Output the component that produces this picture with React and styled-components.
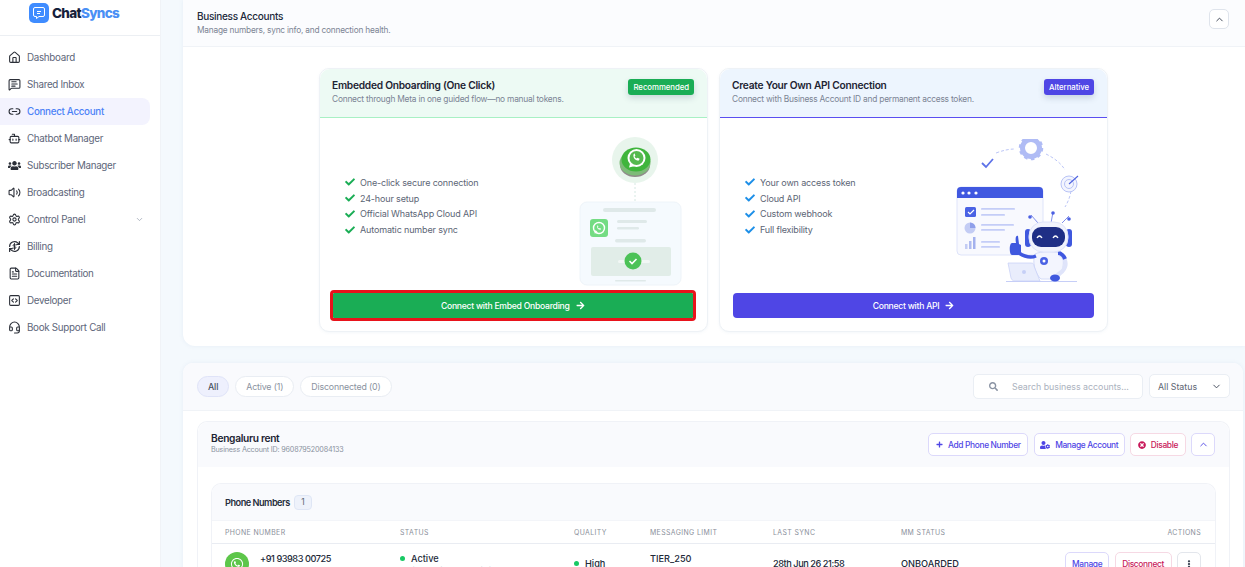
import React from "react";
import styled, { createGlobalStyle } from "styled-components";
import {
  House,
  MessageSquareText,
  Link2,
  Bot,
  Volume2,
  Settings,
  FileText,
  SquareCode,
  Headset,
  ChevronDown,
  ChevronUp,
} from "lucide-react";
import {
  FaUsers,
  FaCheck,
  FaPlus,
  FaUserCog,
  FaTimesCircle,
  FaSearch,
  FaEllipsisV,
  FaArrowRight,
  FaWhatsapp,
} from "react-icons/fa";

const GlobalStyle = createGlobalStyle`
  html, body {
    margin: 0;
    height: 567px;
    overflow: hidden;
    background: #f4f9fd;
    font-family: "Inter", "Noto Sans", sans-serif;
    color: #1f2937;
  }
  * { box-sizing: border-box; }
`;

const Page = styled.div`
  display: flex;
  width: 1245px;
  height: 567px;
  overflow: hidden;
`;

const Sidebar = styled.aside`
  width: 161px;
  flex-shrink: 0;
  background: #fff;
  border-right: 1px solid #f0f3f7;
`;
const LogoBar = styled.div`
  height: 36px;
  display: flex;
  align-items: flex-start;
  gap: 3px;
  padding: 3px 0 0 29px;
  border-bottom: 1px solid #eceff3;
`;
const LogoMark = styled.div`
  width: 20px;
  height: 20px;
  border-radius: 5px;
  background: #3f8cff;
  display: flex;
  align-items: center;
  justify-content: center;
`;
const LogoText = styled.div`
  font-size: 13.5px;
  line-height: 20px;
  font-weight: 800;
  letter-spacing: -0.7px;
  color: #15203a;
  span {
    color: #4a90f5;
  }
`;
const Nav = styled.nav`
  display: flex;
  flex-direction: column;
  padding: 8px 10px 0 0;
`;
const NavItem = styled.div`
  height: 27px;
  display: flex;
  align-items: center;
  gap: 6px;
  padding: 0 6px 0 8px;
  font-size: 9.8px;
  letter-spacing: -0.3px;
  border-radius: 0 8px 8px 0;
  color: ${(p) => (p.$active ? "#4c82f7" : "#5d6679")};
  font-weight: ${(p) => (p.$active ? 500 : 400)};
  background: ${(p) => (p.$active ? "#f3f3fe" : "transparent")};
  svg {
    flex-shrink: 0;
    color: #2b2f38;
  }
`;
const NavCaret = styled.span`
  margin-left: auto;
  display: flex;
  svg {
    color: #9aa3b2;
  }
`;

const Main = styled.main`
  flex: 1;
  min-width: 0;
  padding-left: 22px;
  display: flex;
  flex-direction: column;
  gap: 17px;
`;
const TopPanel = styled.section`
  background: #fff;
  border-radius: 0 0 0 12px;
  box-shadow: 0 0 4px rgba(120, 150, 190, 0.12);
`;
const TopHead = styled.header`
  height: 47px;
  padding: 9px 14px 0;
  display: flex;
  justify-content: space-between;
  background: #fbfcfe;
  border-bottom: 1px solid #f0f3f7;
`;
const TopTitle = styled.div`
  font-size: 10px;
  font-weight: 500;
  letter-spacing: -0.3px;
  line-height: 14px;
  color: #20283a;
`;
const TopSub = styled.div`
  font-size: 8.3px;
  letter-spacing: -0.2px;
  line-height: 11px;
  margin-top: 2px;
  color: #7b8494;
`;
const CollapseBtn = styled.button`
  width: 20px;
  height: 20px;
  padding: 0;
  margin-right: 2px;
  display: flex;
  align-items: center;
  justify-content: center;
  background: #fff;
  border: 1px solid #dfe4ec;
  border-radius: 5px;
  color: #333c4d;
`;
const CardRow = styled.div`
  display: flex;
  justify-content: center;
  gap: 11px;
  padding: 21px 1px 14px 0;
`;
const Card = styled.article`
  width: 389px;
  height: 264px;
  display: flex;
  flex-direction: column;
  background: #fff;
  border: 1px solid #eef2f6;
  border-radius: 10px;
  box-shadow: 0 1px 3px rgba(120, 150, 190, 0.08);
`;
const CardHead = styled.header`
  height: 49px;
  flex-shrink: 0;
  padding: 9px 13px 0 12px;
  display: flex;
  justify-content: space-between;
  align-items: flex-start;
  border-radius: 10px 10px 0 0;
  background: ${(p) => p.$bg};
  border-bottom: 1px solid ${(p) => p.$line};
`;
const CardTitle = styled.div`
  font-size: 10.2px;
  font-weight: 600;
  letter-spacing: -0.25px;
  line-height: 14px;
  color: #1d2433;
`;
const CardSub = styled.div`
  font-size: 8.4px;
  letter-spacing: -0.23px;
  line-height: 11px;
  margin-top: 2px;
  color: #7b8494;
`;
const Badge = styled.span`
  height: 16px;
  margin-top: 1px;
  padding: 0 5px;
  display: flex;
  align-items: center;
  font-size: 7.8px;
  font-weight: 500;
  letter-spacing: -0.05px;
  color: #fff;
  border-radius: 3px;
  background: ${(p) => p.$bg};
  box-shadow: 0 3px 6px rgba(60, 80, 110, 0.2);
`;
const CardBody = styled.div`
  flex: 1;
  min-height: 0;
  display: flex;
  flex-direction: column;
  padding: 0 13px 13px;
`;
const Feature = styled.div`
  flex: 1;
  display: flex;
  align-items: center;
  justify-content: space-between;
  padding-left: 12px;
`;
const CheckList = styled.ul`
  list-style: none;
  margin: 1px 0 0;
  padding: 0;
`;
const CheckItem = styled.li`
  height: 15.8px;
  display: flex;
  align-items: center;
  gap: 5px;
  font-size: 9px;
  letter-spacing: -0.15px;
  color: #5c6575;
  svg {
    color: ${(p) => p.$tick};
  }
`;
const Art = styled.div`
  margin: 11px ${(p) => p.$right}px 0 0;
  display: flex;
`;
const WideButton = styled.button`
  height: 25px;
  flex-shrink: 0;
  margin-right: ${(p) => (p.$flagged ? 1.5 : 0)}px;
  display: flex;
  align-items: center;
  justify-content: center;
  gap: 6px;
  border: 0;
  border-radius: ${(p) => (p.$flagged ? 1 : 4)}px;
  font-family: inherit;
  font-size: 8.6px;
  font-weight: 500;
  letter-spacing: -0.25px;
  color: #fff;
  background: ${(p) => p.$bg};
  outline: ${(p) => (p.$flagged ? "3.5px solid #e8131b" : "none")};
`;

const BottomPanel = styled.section`
  flex: 1;
  margin-right: 2px;
  background: #fff;
  border-radius: 10px 10px 0 0;
  box-shadow: 0 0 4px rgba(120, 150, 190, 0.12);
`;
const Toolbar = styled.div`
  height: 48px;
  display: flex;
  align-items: flex-start;
  padding: 11px 13px 0 14px;
  background: #f9fafd;
  border-bottom: 1px solid #f0f3f7;
  border-radius: 10px 10px 0 0;
`;
const Pills = styled.div`
  display: flex;
  gap: 6px;
  padding-top: 2px;
`;
const Pill = styled.span`
  height: 21px;
  padding: 0 10px;
  display: flex;
  align-items: center;
  font-size: 8.8px;
  letter-spacing: -0.15px;
  font-weight: ${(p) => (p.$on ? 500 : 400)};
  color: ${(p) => (p.$on ? "#48505f" : "#8a92a0")};
  background: ${(p) => (p.$on ? "#eef0fd" : "#fff")};
  border: 1px solid ${(p) => (p.$on ? "#dfe3f8" : "#e9edf3")};
  border-radius: 11px;
`;
const Search = styled.div`
  margin-left: auto;
  width: 170px;
  height: 25px;
  display: flex;
  align-items: center;
  gap: 14px;
  padding-left: 15px;
  font-size: 8.8px;
  color: #abb2be;
  background: #fff;
  border: 1px solid #eaeef4;
  border-radius: 5px;
  svg {
    color: #8a93a3;
  }
`;
const StatusSelect = styled.div`
  margin-left: 6px;
  width: 81px;
  height: 24px;
  display: flex;
  align-items: center;
  justify-content: space-between;
  padding: 0 7px 0 8px;
  font-size: 8.8px;
  color: #5d6573;
  background: #fff;
  border: 1px solid #eaeef4;
  border-radius: 5px;
`;

const AccountWrap = styled.div`
  padding: 10px 13px 0 14px;
`;
const Account = styled.div`
  border: 1px solid #f0f2f7;
  border-bottom: 0;
  border-radius: 10px 10px 0 0;
`;
const AccountHead = styled.div`
  height: 45px;
  display: flex;
  justify-content: space-between;
  padding: 10px 14px 0 13px;
  background: #f9fafd;
  border-radius: 10px 10px 0 0;
`;
const AccountName = styled.div`
  font-size: 10.2px;
  font-weight: 600;
  letter-spacing: -0.3px;
  line-height: 13px;
  color: #1d2433;
`;
const AccountId = styled.div`
  font-size: 7.2px;
  letter-spacing: -0.18px;
  line-height: 9px;
  color: #8a92a0;
`;
const Actions = styled.div`
  display: flex;
  gap: ${(p) => p.$gap}px;
  align-items: flex-start;
  padding-top: ${(p) => p.$top || 0}px;
`;
const SmallBtn = styled.button`
  height: 23px;
  padding: 0 ${(p) => p.$pad ?? 8}px;
  display: flex;
  align-items: center;
  gap: 5px;
  background: #fff;
  border: 1px solid ${(p) => p.$line};
  border-radius: 5px;
  font-family: inherit;
  font-size: 8.4px;
  font-weight: 500;
  letter-spacing: -0.35px;
  color: ${(p) => p.$color};
`;
const PhoneCard = styled.div`
  margin: 16px 13px 0;
  border: 1px solid #f0f2f7;
  border-bottom: 0;
  border-radius: 10px 10px 0 0;
  overflow: hidden;
`;
const PhoneHead = styled.div`
  height: 37px;
  display: flex;
  align-items: center;
  gap: 4px;
  padding-left: 13px;
  font-size: 9.2px;
  font-weight: 600;
  letter-spacing: -0.5px;
  color: #262d3c;
  background: #f9fafd;
  border-bottom: 1px solid #f3f5f9;
`;
const CountChip = styled.span`
  width: 18px;
  height: 15px;
  display: flex;
  align-items: center;
  justify-content: center;
  font-size: 8.4px;
  font-weight: 400;
  color: #5d6573;
  background: #eef2fb;
  border: 1px solid #dfe6f5;
  border-radius: 4px;
`;
const TableRow = styled.div`
  display: grid;
  grid-template-columns: 175px 174px 76px 123px 128px 1fr auto;
  padding: 0 14px 0 13px;
`;
const HeadRow = styled(TableRow)`
  height: 23px;
  align-items: center;
  border-bottom: 1px solid #e9ecf2;
`;
const HeadCell = styled.span`
  font-size: 6.9px;
  letter-spacing: 0.4px;
  color: #8b909b;
`;
const BodyRow = styled(TableRow)`
  padding-top: 8px;
  align-items: start;
`;
const PhoneCell = styled.div`
  display: flex;
  gap: 11px;
`;
const Avatar = styled.div`
  width: 24px;
  height: 24px;
  border-radius: 50%;
  background: #5dc64a;
  color: #fff;
  display: flex;
  align-items: center;
  justify-content: center;
`;
const Strong = styled.div`
  font-size: 9.2px;
  line-height: 13px;
  font-weight: 500;
  letter-spacing: ${(p) => (p.$tight ? -0.45 : 0)}px;
  color: #222938;
`;
const Faint = styled.div`
  font-size: 7.4px;
  line-height: 10px;
  margin-top: 1px;
  color: #b4b9c3;
`;
const StatusLine = styled.div`
  display: flex;
  align-items: center;
  gap: 6px;
  padding-top: ${(p) => p.$top || 0}px;
`;
const Dot = styled.span`
  width: 5px;
  height: 5px;
  border-radius: 50%;
  background: #18c964;
`;
const Offset = styled.div`
  padding-top: 5px;
`;

// lucide has no coin with arrows around it
function BillingIcon() {
  return (
    <svg width="13" height="13" viewBox="0 0 24 24" fill="none" stroke="currentColor" strokeWidth="2.200" strokeLinecap="round" strokeLinejoin="round">
      <path d="M3 12a9 9 0 0 1 15-6.700L21 8" />
      <path d="M21 3v5h-5" />
      <path d="M21 12a9 9 0 0 1-15 6.700L3 16" />
      <path d="M3 21v-5h5" />
      <path d="M14.500 9.500c-.5-1-1.500-1.500-2.500-1.500-1.400 0-2.500.8-2.500 2s1.100 1.700 2.500 2 2.500.8 2.500 2-1.100 2-2.500 2c-1 0-2-.5-2.500-1.500M12 6.500v11" strokeWidth="1.800" />
    </svg>
  );
}

const navItems = [
  { label: "Dashboard", icon: <House size={13} /> },
  { label: "Shared Inbox", icon: <MessageSquareText size={13} /> },
  { label: "Connect Account", icon: <Link2 size={13} />, active: true },
  { label: "Chatbot Manager", icon: <Bot size={13} /> },
  { label: "Subscriber Manager", icon: <FaUsers size={13} /> },
  { label: "Broadcasting", icon: <Volume2 size={13} /> },
  { label: "Control Panel", icon: <Settings size={13} />, caret: true },
  { label: "Billing", icon: <BillingIcon /> },
  { label: "Documentation", icon: <FileText size={13} /> },
  { label: "Developer", icon: <SquareCode size={13} /> },
  { label: "Book Support Call", icon: <Headset size={13} /> },
];

const HANDSET = "M0 0c-.6 2.800 1.600 5.300 4.500 5l.6-1.500-1.800-.8-.8.700c-.8-.4-1.300-1-1.600-1.800l.7-.8-.8-1.800z";

function OnboardArt() {
  return (
    <svg width="110" height="152" viewBox="0 0 110 152">
      <circle cx="59" cy="25" r="23" fill="#e8f5ec" />
      <ellipse cx="59" cy="30" rx="15" ry="12" fill="#8f8a8a" />
      <ellipse cx="59" cy="28" rx="15.500" ry="12.500" fill="#7dbb78" />
      <ellipse cx="60" cy="24.500" rx="14.500" ry="12" fill="#3fb53c" />
      <circle cx="60.500" cy="23" r="9" fill="#fff" />
      <path d="M53 32.500l1.500-5.500 4.500 4z" fill="#fff" />
      <circle cx="60.500" cy="23" r="7" fill="#55b94f" />
      <path d={HANDSET} transform="translate(57.500 19.500) scale(1.200)" fill="#fff" />
      <line x1="59" y1="48" x2="59" y2="67" stroke="#d5e8e2" strokeDasharray="2 2" />
      <rect x="4" y="67" width="101" height="83" rx="7" fill="#f5fafe" stroke="#eef4f9" />
      <rect x="27" y="73" width="53" height="4" rx="2" fill="#dfe9e9" />
      <rect x="14" y="84" width="18" height="18" rx="3" fill="#74dc83" />
      <circle cx="23" cy="93" r="5.500" fill="none" stroke="#fff" strokeWidth="1.400" />
      <path d="M18.500 98.500l1-3.500 2.500 2.500z" fill="#fff" />
      <path d={HANDSET} transform="translate(21.200 91) scale(0.750)" fill="#fff" />
      <rect x="41" y="85" width="30" height="3" rx="1.500" fill="#dfe9e9" />
      <rect x="41" y="92" width="22" height="2.500" rx="1.200" fill="#dfe9e9" />
      <rect x="39" y="104" width="31" height="3.500" rx="1.700" fill="#dfe9e9" />
      <rect x="15" y="112" width="80" height="29" rx="2" fill="#e1ede8" />
      <rect x="42" y="125" width="32" height="3" rx="1.500" fill="#f2f7f5" />
      <circle cx="57" cy="126" r="8.500" fill="#4cc257" />
      <path d="M53.500 126l2.500 2.500 4.500-4.500" fill="none" stroke="#fff" strokeWidth="1.600" />
      <rect x="39" y="145" width="31" height="1.500" rx="0.700" fill="#dfe9e9" />
    </svg>
  );
}

function RobotArt() {
  return (
    <svg width="130" height="145" viewBox="20 10 130 145">
      <path d="M66 24c8-3 14-4 19-4M116 25c8 4 15 9 19 16M141 62c-1 6-3 11-6 16" fill="none" stroke="#a9b6f4" strokeWidth="0.800" strokeDasharray="3 2" />
      <path d="M52 34l4 4 7-8" fill="none" stroke="#5d72e8" strokeWidth="1.800" />
      <circle cx="101" cy="19" r="8.500" fill="none" stroke="#b0bcf5" strokeWidth="5" />
      <circle cx="101" cy="19" r="11" fill="none" stroke="#b0bcf5" strokeWidth="2.500" strokeDasharray="3.500 3.400" />
      <circle cx="139" cy="55" r="8" fill="#f3f5fe" stroke="#b8c3f6" strokeWidth="1" />
      <circle cx="139" cy="55" r="4.500" fill="none" stroke="#b8c3f6" strokeWidth="1" />
      <path d="M139 55l9-8" stroke="#4f63e0" strokeWidth="1.200" />
      <rect x="27" y="58" width="86" height="68" rx="4" fill="#f8f9fe" stroke="#dfe4fa" />
      <path d="M27 69v-7a4 4 0 0 1 4-4h78a4 4 0 0 1 4 4v7z" fill="#4058e0" />
      <circle cx="33" cy="64" r="1.600" fill="#fff" />
      <circle cx="39" cy="64" r="1.600" fill="#fff" />
      <circle cx="46" cy="64" r="1.600" fill="#fff" />
      <rect x="35" y="78" width="11" height="10" rx="1.500" fill="#4a62e4" />
      <path d="M38 83l2 2 4-4" fill="none" stroke="#fff" strokeWidth="1.200" />
      <rect x="51" y="79" width="34" height="1.800" rx="0.900" fill="#c4cdf7" />
      <rect x="51" y="85" width="24" height="1.800" rx="0.900" fill="#c4cdf7" />
      <circle cx="40" cy="99" r="5.500" fill="#c3ccf4" />
      <path d="M40 99v-5.500a5.500 5.500 0 0 1 5.500 5.500z" fill="#8f9fea" />
      <rect x="51" y="95" width="33" height="1.800" rx="0.900" fill="#c4cdf7" />
      <rect x="51" y="100" width="24" height="1.800" rx="0.900" fill="#c4cdf7" />
      <rect x="35" y="115" width="2.500" height="5" fill="#c3ccf4" />
      <rect x="39" y="112" width="2.500" height="8" fill="#b0bcf0" />
      <rect x="43" y="108" width="2.500" height="12" fill="#a3b1ee" />
      <rect x="51" y="112" width="19" height="1.800" rx="0.900" fill="#c4cdf7" />
      <rect x="51" y="117" width="19" height="1.800" rx="0.900" fill="#c4cdf7" />
      <line x1="76" y1="152.500" x2="147" y2="152.500" stroke="#b7c1f5" strokeWidth="0.800" />
      <path d="M108 94l-7-8M121 94l2-11M132 94l7-7" stroke="#4a5fe2" strokeWidth="0.700" />
      <circle cx="100" cy="88" r="1.800" fill="#4a5fe2" />
      <circle cx="123" cy="84" r="1.800" fill="#4a5fe2" />
      <circle cx="139" cy="90" r="1.800" fill="#4a5fe2" />
      <path d="M105 125c5-3 23-3 27 0 3 8 1 20-5 25h-16c-6-5-9-17-6-25z" fill="#f3f5fe" stroke="#d5dcf8" />
      <circle cx="114" cy="132" r="4" fill="#4a62e4" />
      <circle cx="114" cy="132" r="1.500" fill="#fff" />
      <path d="M106 127c-5 2-11 1-17-3" fill="none" stroke="#4058e0" strokeWidth="3.500" />
      <path d="M129 125c5 2 8 8 6 13-1 3-4 6-8 8" fill="none" stroke="#dfe4fa" strokeWidth="4" />
      <path d="M128 124c3 0 6 3 7 6" fill="none" stroke="#4058e0" strokeWidth="4" />
      <path d="M86 114h-4c-3 0-3 12 0 12h6c2 0 3-2 3-3v-7l-2-1-1-8c-2-1-3 2-2 7z" fill="#3f58de" />
      <ellipse cx="125" cy="149" rx="5" ry="3.500" fill="#3f58de" />
      <rect x="95" y="100" width="6" height="18" rx="3" fill="#3f58de" />
      <rect x="136" y="100" width="6" height="18" rx="3" fill="#3f58de" />
      <rect x="99" y="93" width="39" height="30" rx="14" fill="#f1f3fd" stroke="#dfe4fa" />
      <rect x="102" y="98" width="33" height="20" rx="9" fill="#1f2f86" />
      <path d="M107 109q2.500-4 5 0M123 109q2.500-4 5 0" fill="none" stroke="#fff" strokeWidth="1.300" />
      <path d="M78 134h23c2 0 3 1 3 3l6 15H84c-1 0-2-1-3-3z" fill="#e9edfc" stroke="#c6cff6" strokeWidth="0.700" />
      <circle cx="94" cy="143" r="2" fill="#c6cff6" />
    </svg>
  );
}

function LogoIcon() {
  return (
    <svg width="14" height="14" viewBox="0 0 14 14" fill="none" stroke="#fff" strokeWidth="1">
      <path d="M3 1.500h8a1.500 1.500 0 0 1 1.500 1.500v6a1.500 1.500 0 0 1-1.500 1.500H7l-2.500 2v-2H3A1.500 1.500 0 0 1 1.500 9V3A1.500 1.500 0 0 1 3 1.500z" />
      <path d="M5 5.500h4M5 7.500h3" />
    </svg>
  );
}

const cards = [
  {
    title: "Embedded Onboarding (One Click)",
    sub: "Connect through Meta in one guided flow—no manual tokens.",
    badge: "Recommended",
    accent: "#1aad55",
    headBg: "#edfaf4",
    line: "#a8f0c4",
    tick: "#1aad55",
    features: ["One-click secure connection", "24-hour setup", "Official WhatsApp Cloud API", "Automatic number sync"],
    button: "Connect with Embed Onboarding",
    art: <OnboardArt />,
    artRight: 8,
    flagged: true,
  },
  {
    title: "Create Your Own API Connection",
    sub: "Connect with Business Account ID and permanent access token.",
    badge: "Alternative",
    accent: "#4f46e5",
    headBg: "#edf5fe",
    line: "#5a4ff0",
    tick: "#1d8fe8",
    features: ["Your own access token", "Cloud API", "Custom webhook", "Full flexibility"],
    button: "Connect with API",
    art: <RobotArt />,
    artRight: 14,
  },
];

export default function App() {
  return (
    <Page>
      <GlobalStyle />
      <Sidebar>
        <LogoBar>
          <LogoMark>
            <LogoIcon />
          </LogoMark>
          <LogoText>
            Chat<span>Syncs</span>
          </LogoText>
        </LogoBar>
        <Nav>
          {navItems.map((item) => (
            <NavItem key={item.label} $active={item.active}>
              {item.icon}
              {item.label}
              {item.caret && (
                <NavCaret>
                  <ChevronDown size={9} />
                </NavCaret>
              )}
            </NavItem>
          ))}
        </Nav>
      </Sidebar>

      <Main>
        <TopPanel>
          <TopHead>
            <div>
              <TopTitle>Business Accounts</TopTitle>
              <TopSub>Manage numbers, sync info, and connection health.</TopSub>
            </div>
            <CollapseBtn>
              <ChevronUp size={11} />
            </CollapseBtn>
          </TopHead>
          <CardRow>
            {cards.map((card) => (
              <Card key={card.title}>
                <CardHead $bg={card.headBg} $line={card.line}>
                  <div>
                    <CardTitle>{card.title}</CardTitle>
                    <CardSub>{card.sub}</CardSub>
                  </div>
                  <Badge $bg={card.accent}>{card.badge}</Badge>
                </CardHead>
                <CardBody>
                  <Feature>
                    <CheckList>
                      {card.features.map((f) => (
                        <CheckItem key={f} $tick={card.tick}>
                          <FaCheck size={10} />
                          {f}
                        </CheckItem>
                      ))}
                    </CheckList>
                    <Art $right={card.artRight}>{card.art}</Art>
                  </Feature>
                  <WideButton $bg={card.accent} $flagged={card.flagged}>
                    {card.button}
                    <FaArrowRight size={9} />
                  </WideButton>
                </CardBody>
              </Card>
            ))}
          </CardRow>
        </TopPanel>

        <BottomPanel>
          <Toolbar>
            <Pills>
              <Pill $on>All</Pill>
              <Pill>Active (1)</Pill>
              <Pill>Disconnected (0)</Pill>
            </Pills>
            <Search>
              <FaSearch size={9} />
              Search business accounts...
            </Search>
            <StatusSelect>
              All Status
              <ChevronDown size={11} color="#3c4454" />
            </StatusSelect>
          </Toolbar>
          <AccountWrap>
            <Account>
              <AccountHead>
                <div>
                  <AccountName>Bengaluru rent</AccountName>
                  <AccountId>Business Account ID: 960879520084133</AccountId>
                </div>
                <Actions $gap={5.500} $top={1}>
                  <SmallBtn $line="#dcd9fb" $color="#4f46e5" $pad={6.500}>
                    <FaPlus size={7} />
                    Add Phone Number
                  </SmallBtn>
                  <SmallBtn $line="#dcd9fb" $color="#4f46e5" $pad={5.500}>
                    <FaUserCog size={10} />
                    Manage Account
                  </SmallBtn>
                  <SmallBtn $line="#f6d9e4" $color="#c8185a" $pad={6.500}>
                    <FaTimesCircle size={8} />
                    Disable
                  </SmallBtn>
                  <SmallBtn $line="#dcd9fb" $color="#4f46e5" $pad={5.500}>
                    <ChevronUp size={11} />
                  </SmallBtn>
                </Actions>
              </AccountHead>
              <PhoneCard>
                <PhoneHead>
                  Phone Numbers <CountChip>1</CountChip>
                </PhoneHead>
                <HeadRow>
                  <HeadCell>PHONE NUMBER</HeadCell>
                  <HeadCell>STATUS</HeadCell>
                  <HeadCell>QUALITY</HeadCell>
                  <HeadCell>MESSAGING LIMIT</HeadCell>
                  <HeadCell>LAST SYNC</HeadCell>
                  <HeadCell>MM STATUS</HeadCell>
                  <HeadCell>ACTIONS</HeadCell>
                </HeadRow>
                <BodyRow>
                  <PhoneCell>
                    <Avatar>
                      <FaWhatsapp size={14} />
                    </Avatar>
                    <div>
                      <Strong $tight>+91 93983 00725</Strong>
                      <Faint>Bengaluru rent</Faint>
                    </div>
                  </PhoneCell>
                  <div>
                    <StatusLine>
                      <Dot />
                      <Strong>Active</Strong>
                    </StatusLine>
                    <Faint>Available Without Restriction</Faint>
                  </div>
                  <StatusLine $top={5}>
                    <Dot />
                    <Strong>High</Strong>
                  </StatusLine>
                  <div>
                    <Strong>TIER_250</Strong>
                    <Faint>MESSAGES / 24H</Faint>
                  </div>
                  <Offset>
                    <Strong $tight>28th Jun 26 21:58</Strong>
                  </Offset>
                  <Offset>
                    <Strong>ONBOARDED</Strong>
                  </Offset>
                  <Actions $gap={5.500}>
                    <SmallBtn $line="#dcd9fb" $color="#4f46e5" $pad={6}>
                      Manage
                    </SmallBtn>
                    <SmallBtn $line="#f6d9e4" $color="#c8185a" $pad={6.500}>
                      Disconnect
                    </SmallBtn>
                    <SmallBtn $line="#e3e6ec" $color="#3c4454" $pad={7}>
                      <FaEllipsisV size={8} />
                    </SmallBtn>
                  </Actions>
                </BodyRow>
              </PhoneCard>
            </Account>
          </AccountWrap>
        </BottomPanel>
      </Main>
    </Page>
  );
}
